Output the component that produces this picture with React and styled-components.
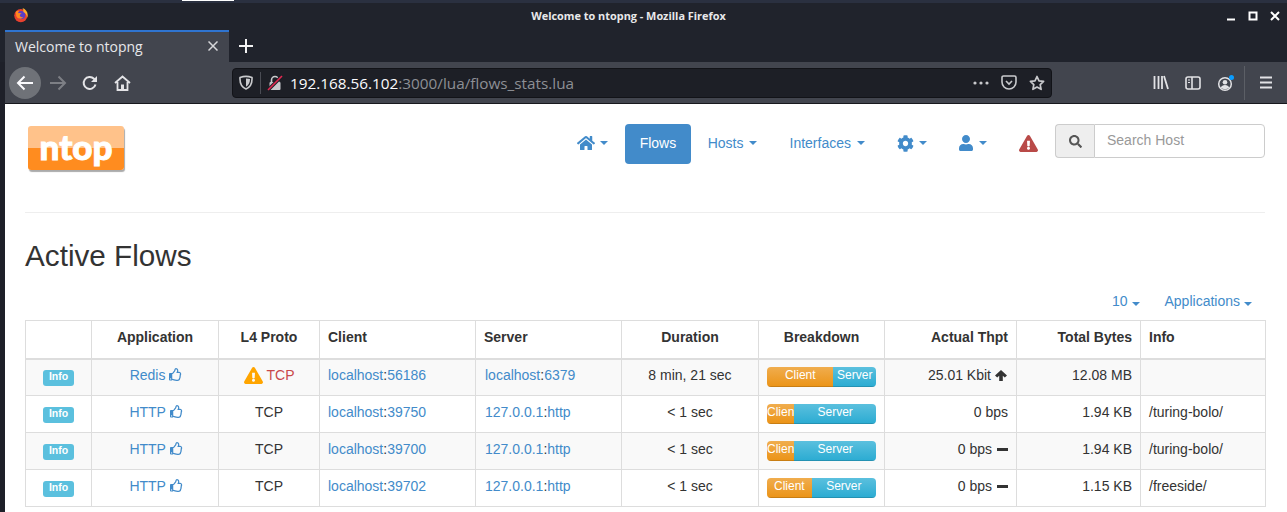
import React from 'react';
import styled, { createGlobalStyle } from 'styled-components';
import { FaHome, FaCog, FaUser, FaExclamationTriangle, FaSearch, FaRegThumbsUp } from 'react-icons/fa';

const GlobalStyle = createGlobalStyle`
  html, body { margin: 0; padding: 0; background: #fff; overflow: hidden; }
  * { box-sizing: border-box; }
  body { font-family: "Liberation Sans", Arial, sans-serif; font-size: 14px; color: #333; }
  a { color: #428bca; text-decoration: none; }
`;

const Frame = styled.div`
  width: 1287px;
  height: 512px;
  overflow: hidden;
  display: flex;
  flex-direction: column;
  background: #1e2029;
`;

const TitleBar = styled.div`
  height: 30px;
  flex: none;
  background: #20232c;
  border-top: 3px solid #2a3040;
  display: flex;
  align-items: center;
  padding: 0 7px 3px 13px;
  position: relative;
`;

const BehindWindow = styled.div`
  position: absolute;
  top: -3px;
  left: 182px;
  width: 52px;
  height: 1px;
  background: #fff;
`;

const WindowTitle = styled.div`
  flex: 1;
  text-align: center;
  color: #e8e8ea;
  font: 700 10.9px "Open Sans", sans-serif;
  padding-left: 2px;
`;

const WindowButtons = styled.div`
  display: flex;
  align-items: center;
  gap: 12px;
  padding-top: 2px;
`;

const TabStrip = styled.div`
  height: 32px;
  flex: none;
  background: #20232c;
  display: flex;
  align-items: stretch;
  padding-left: 5px;
`;

const Tab = styled.div`
  width: 224px;
  background: #42454e;
  border-top: 2px solid #2f74d0;
  color: #e6e7ea;
  font: 400 14px "Open Sans", sans-serif;
  display: flex;
  align-items: center;
  justify-content: space-between;
  padding: 0 11px 2px 10px;
`;

const NewTab = styled.div`
  width: 34px;
  display: flex;
  align-items: center;
  justify-content: center;
`;

const Toolbar = styled.div`
  height: 42px;
  flex: none;
  margin-left: 5px;
  background: #42454e;
  border-bottom: 1px solid #17181d;
  display: flex;
  align-items: center;
  padding-left: 4px;
`;

const RoundBack = styled.div`
  width: 32px;
  height: 32px;
  border-radius: 50%;
  background: #6f7278;
  display: flex;
  align-items: center;
  justify-content: center;
  margin-right: 6px;
`;

const NavIcon = styled.div`
  width: 22px;
  height: 22px;
  margin-right: 10px;
  display: flex;
  align-items: center;
  justify-content: center;
`;

const UrlBar = styled.div`
  width: 820px;
  height: 30px;
  margin-left: 89px;
  background: #1d1f26;
  border: 1px solid #121318;
  border-radius: 4px;
  display: flex;
  align-items: center;
  padding-left: 6px;
`;

const UrlDivider = styled.div`
  width: 1px;
  height: 22px;
  background: #4a4c54;
  margin: 0 6px 0 7px;
`;

const UrlText = styled.div`
  flex: 1;
  margin-left: 7px;
  font: 400 15.3px "Open Sans", sans-serif;
  color: #8d8f95;
  span { color: #fbfbfe; }
`;

const UrlActions = styled.div`
  display: flex;
  align-items: center;
  gap: 12px;
  padding-right: 6px;
`;

const ToolbarRight = styled.div`
  flex: 1;
  display: flex;
  align-items: center;
  justify-content: flex-end;
  padding-right: 14px;
  gap: 16px;
`;

const ToolbarSep = styled.div`
  width: 1px;
  height: 34px;
  background: #5c5f66;
  margin: 0 -2px 0 -7px;
`;

const Page = styled.div`
  flex: 1;
  background: #fff;
  margin-left: 5px;
  padding: 0 22px 0 20px;
  min-height: 0;
`;

const Header = styled.div`
  height: 109px;
  border-bottom: 1px solid #eee;
  display: flex;
  align-items: flex-start;
`;

const Logo = styled.div`
  width: 96px;
  height: 44px;
  margin: 22px 0 0 3px;
  border-radius: 3px;
  background: linear-gradient(#ffc28a 0 50%, #ff8c1f 50% 100%);
  box-shadow: 1px 2px 1px #aaa;
  color: #fff;
  font: 900 35px/41px "Lato", sans-serif;
  -webkit-text-stroke: 1px #fff;
  text-align: center;
`;

const Nav = styled.nav`
  margin-left: auto;
  display: flex;
  align-items: flex-start;
  gap: 2px;
  margin-top: 20px;
`;

const NavLink = styled.a`
  height: 40px;
  display: flex;
  align-items: center;
  padding: 0 ${(p) => p.$pad ?? 15}px 2px;
  margin-right: ${(p) => p.$right || 0}px;
  border-radius: 4px;
  color: ${(p) => (p.$active ? '#fff' : '#428bca')};
  background: ${(p) => (p.$active ? '#428bca' : 'transparent')};
`;

const Caret = styled.span`
  display: inline-block;
  width: 0;
  height: 0;
  margin-left: ${(p) => p.$gap || 5}px;
  border-top: 4px solid #428bca;
  border-left: 4px solid transparent;
  border-right: 4px solid transparent;
`;

const SearchGroup = styled.div`
  display: flex;
  width: 210px;
  height: 34px;
`;

const SearchAddon = styled.div`
  width: 39px;
  background: #eee;
  border: 1px solid #ccc;
  border-right: 0;
  border-radius: 4px 0 0 4px;
  display: flex;
  align-items: center;
  justify-content: center;
  color: #555;
`;

const SearchInput = styled.div`
  flex: 1;
  border: 1px solid #ccc;
  border-radius: 0 4px 4px 0;
  color: #999;
  padding: 0 12px;
  line-height: 31px;
`;

const Title = styled.h2`
  margin: 24px 0 0;
  font-size: 29.7px;
  font-weight: 500;
  line-height: 38px;
  color: #333;
`;

const TableTools = styled.div`
  display: flex;
  justify-content: flex-end;
  gap: 25px;
  height: 20px;
  margin-top: 16px;
  padding-right: 13px;
  line-height: 20px;
`;

const ToolCaret = styled(Caret)`
  margin-left: 4px;
`;

const Table = styled.table`
  width: 1240px;
  table-layout: fixed;
  border-collapse: collapse;
  margin-top: 9px;
`;

const Th = styled.th`
  height: 38px;
  padding: 0 8px 4px;
  border: 1px solid #ddd;
  border-bottom: 2px solid #ddd;
  font-weight: 700;
  text-align: ${(p) => p.$align || 'center'};
`;

const Row = styled.tr`
  background: ${(p) => (p.$odd ? '#f9f9f9' : '#fff')};
`;

const Td = styled.td`
  height: 37px;
  padding: 0 8px 4px ${(p) => p.$indent || 8}px;
  border: 1px solid #ddd;
  text-align: ${(p) => p.$align || 'center'};
  white-space: nowrap;
`;

const InfoBadge = styled.span`
  display: inline-block;
  padding: 1px 6px 4px;
  margin-top: 6px;
  border-radius: 3px;
  background: #5bc0de;
  color: #fff;
  font-size: 10.5px;
  font-weight: 700;
  line-height: 11px;
`;

const Thumb = styled(FaRegThumbsUp)`
  color: #428bca;
  font-size: 13px;
  vertical-align: -1px;
`;

const WarnIcon = styled(FaExclamationTriangle)`
  color: #ffa500;
  font-size: 19px;
  vertical-align: -2px;
  margin: -5px 4px -3px 0;
`;

const Danger = styled.span`
  color: #c9484a;
`;

const Bar = styled.div`
  display: flex;
  width: 109px;
  height: 20px;
  margin-top: 4px;
  border-radius: 4px;
  overflow: hidden;
  color: #fff;
  font-size: 12px;
  line-height: 16px;
  text-align: center;
`;

const Segment = styled.div`
  overflow: hidden;
  background: ${(p) => (p.$kind === 'client'
    ? 'linear-gradient(#f0ad4e, #eb9316)'
    : 'linear-gradient(#5bc0de, #2aabd2)')};
  box-shadow: inset 0 -1px 0 rgba(0, 0, 0, 0.15);
`;

const TrendFlat = styled.span`
  display: inline-block;
  width: 11px;
  height: 3px;
  margin-left: 5px;
  vertical-align: 3px;
  background: #333;
`;

const TrendUpIcon = styled.svg`
  margin: 0 1px 0 4px;
  vertical-align: -1px;
`;

const TrendUp = () => (
  <TrendUpIcon width="12" height="11" viewBox="0 0 12 11">
    <path d="M6 0l6 5.500-2.200 2-2-1.800V11H4.200V5.700l-2 1.800L0 5.500z" fill="#333" />
  </TrendUpIcon>
);

const Firefox = () => (
  <svg width="16" height="16" viewBox="0 0 16 16">
    <circle cx="7.8" cy="8.6" r="6.6" fill="#e8412f" />
    <circle cx="8.3" cy="8" r="4" fill="#5a3ec8" />
    <path d="M9.5 1c3 1.2 5.200 3.500 5.200 7 0 1-.2 1.900-.6 2.700-.2-2.700-1.500-4.700-3.700-5.700 .2-1.400-.1-2.900-.9-4z" fill="#ffb02e" />
    <path d="M3 4.500c1-.6 2-.8 3-.6-.7.8-1 1.600-.8 2.400 1.200-.5 2.600-.3 3.500.5-1.500.2-2 1-1.800 2 .3 1.300 2 1.800 3.400 1-.8 1.500-2.600 2.300-4.300 1.800C3.900 11 2.800 9 3.100 7c-.4-.6-.4-1.600-.1-2.500z" fill="#ff8a1f" />
  </svg>
);

const Minimize = () => (
  <svg width="10" height="10" viewBox="0 0 10 10"><path d="M1 8.500h8" stroke="#fff" strokeWidth="2" /></svg>
);
const Maximize = () => (
  <svg width="10" height="10" viewBox="0 0 10 10"><rect x="1.500" y="1.500" width="7" height="7" fill="none" stroke="#fff" strokeWidth="2" /></svg>
);
const CloseWin = () => (
  <svg width="10" height="10" viewBox="0 0 10 10"><path d="M1 1l8 8M9 1l-8 8" stroke="#fff" strokeWidth="2" /></svg>
);
const CloseTab = () => (
  <svg width="10" height="10" viewBox="0 0 10 10"><path d="M.5.5l9 9M9.500.5l-9 9" stroke="#d6d7da" strokeWidth="1.500" /></svg>
);
const Plus = () => (
  <svg width="14" height="14" viewBox="0 0 14 14"><path d="M7 0v14M0 7h14" stroke="#f2f2f3" strokeWidth="2" /></svg>
);
const ArrowLeft = () => (
  <svg width="18" height="16" viewBox="0 0 18 16"><path d="M17 8H2M8.500 1.500L2 8l6.500 6.500" fill="none" stroke="#fbfbfe" strokeWidth="2" /></svg>
);
const ArrowRight = () => (
  <svg width="18" height="16" viewBox="0 0 18 16"><path d="M1 8h15M9.500 1.500L16 8l-6.500 6.500" fill="none" stroke="#7d7f85" strokeWidth="2" /></svg>
);
const Reload = () => (
  <svg width="16" height="16" viewBox="0 0 16 16"><path d="M13.500 9.500A6 6 0 1 1 12 3.800L14 5.500" fill="none" stroke="#e4e4e7" strokeWidth="2" /><path d="M15 1v6H9z" fill="#e4e4e7" /></svg>
);
const BrowserHome = () => (
  <svg width="17" height="16" viewBox="0 0 17 16"><path d="M1 8l7.500-6.500L16 8M3.500 7v8h10V7" fill="none" stroke="#e4e4e7" strokeWidth="1.800" /><rect x="7" y="9.500" width="3" height="5" fill="#e4e4e7" /></svg>
);
const Shield = () => (
  <svg width="14" height="15" viewBox="0 0 14 15"><path d="M1 2.500c4-1.500 8-1.500 12 0 .3 5-1 9.500-6 11.500C2 12 .7 7.500 1 2.500z" fill="none" stroke="#c9cacd" strokeWidth="1.600" /><path d="M7 3.500c1.500 0 3 .2 4 .6 0 3-.9 6-4 7.600z" fill="#c9cacd" /></svg>
);
const BrokenLock = () => (
  <svg width="16" height="16" viewBox="0 0 16 16">
    <path d="M4.500 7V5a3.500 3.500 0 0 1 7 0v2" fill="none" stroke="#c9cacd" strokeWidth="1.600" />
    <rect x="2.500" y="7" width="11" height="8" rx="1" fill="#c9cacd" />
    <path d="M1 15L15 1" stroke="#1d1f26" strokeWidth="3.500" />
    <path d="M1 15L15 1" stroke="#e22850" strokeWidth="1.600" />
  </svg>
);
const Dots = () => (
  <svg width="16" height="4" viewBox="0 0 16 4" fill="#c9cacd"><circle cx="2" cy="2" r="1.600" /><circle cx="8" cy="2" r="1.600" /><circle cx="14" cy="2" r="1.600" /></svg>
);
const Pocket = () => (
  <svg width="16" height="15" viewBox="0 0 16 15"><path d="M1 2.500C1 1.600 1.600 1 2.500 1h11c.9 0 1.500.6 1.500 1.500V7a7 7 0 0 1-14 0z" fill="none" stroke="#c9cacd" strokeWidth="1.600" /><path d="M5 6l3 3 3-3" fill="none" stroke="#c9cacd" strokeWidth="1.600" /></svg>
);
const Star = () => (
  <svg width="16" height="16" viewBox="0 0 16 16"><path d="M8 1.500l2 4.300 4.600.6-3.400 3.200.9 4.700L8 12l-4.100 2.300.9-4.700L1.400 6.400 6 5.800z" fill="none" stroke="#c9cacd" strokeWidth="1.700" strokeLinejoin="round" /></svg>
);
const Library = () => (
  <svg width="16" height="15" viewBox="0 0 16 15" stroke="#e2e2e5" strokeWidth="1.800"><path d="M1.500 1v13M5.500 1v13M9 1v13M11 1l4 13" fill="none" /></svg>
);
const Sidebar = () => (
  <svg width="16" height="14" viewBox="0 0 16 14"><rect x="1" y="1" width="14" height="12" rx="2" fill="none" stroke="#e2e2e5" strokeWidth="1.600" /><path d="M7 1v12" stroke="#e2e2e5" strokeWidth="1.600" /><path d="M3 4h2M3 6.500h2" stroke="#e2e2e5" strokeWidth="1.200" /></svg>
);
const Account = () => (
  <svg width="18" height="18" viewBox="0 0 18 18">
    <circle cx="8" cy="10" r="6.300" fill="none" stroke="#e2e2e5" strokeWidth="1.500" />
    <circle cx="8" cy="8.200" r="2.300" fill="#e2e2e5" />
    <path d="M3.800 14c.5-2.300 2.200-3 4.200-3s3.700.7 4.200 3c-2.500 1.500-6 1.500-8.400 0z" fill="#e2e2e5" />
    <circle cx="14.500" cy="3.500" r="2.500" fill="#0a9dff" />
  </svg>
);
const Menu = () => (
  <svg width="14" height="13" viewBox="0 0 14 13"><path d="M1 1.500h12M1 6.500h12M1 11.500h12" stroke="#e2e2e5" strokeWidth="1.800" /></svg>
);

const columns = [
  { label: '', width: 66 },
  { label: 'Application', width: 127 },
  { label: 'L4 Proto', width: 101 },
  { label: 'Client', width: 156, align: 'left' },
  { label: 'Server', width: 146, align: 'left' },
  { label: 'Duration', width: 137 },
  { label: 'Breakdown', width: 126 },
  { label: 'Actual Thpt', width: 132, align: 'right' },
  { label: 'Total Bytes', width: 124, align: 'right' },
  { label: 'Info', width: 125, align: 'left' },
];

const flows = [
  { app: 'Redis', warn: true, clientPort: '56186', serverHost: 'localhost', serverPort: '6379', duration: '8 min, 21 sec', client: 61, thpt: '25.01 Kbit', trend: 'up', bytes: '12.08 MB', info: '' },
  { app: 'HTTP', clientPort: '39750', serverHost: '127.0.0.1', serverPort: 'http', duration: '< 1 sec', client: 25, thpt: '0 bps', bytes: '1.94 KB', info: '/turing-bolo/' },
  { app: 'HTTP', clientPort: '39700', serverHost: '127.0.0.1', serverPort: 'http', duration: '< 1 sec', client: 25, thpt: '0 bps', trend: 'flat', bytes: '1.94 KB', info: '/turing-bolo/' },
  { app: 'HTTP', clientPort: '39702', serverHost: '127.0.0.1', serverPort: 'http', duration: '< 1 sec', client: 41, thpt: '0 bps', trend: 'flat', bytes: '1.15 KB', info: '/freeside/' },
];

export default function App() {
  return (
    <Frame>
      <GlobalStyle />
      <TitleBar>
        <BehindWindow />
        <Firefox />
        <WindowTitle>Welcome to ntopng - Mozilla Firefox</WindowTitle>
        <WindowButtons>
          <Minimize />
          <Maximize />
          <CloseWin />
        </WindowButtons>
      </TitleBar>
      <TabStrip>
        <Tab>
          Welcome to ntopng
          <CloseTab />
        </Tab>
        <NewTab><Plus /></NewTab>
      </TabStrip>
      <Toolbar>
        <RoundBack><ArrowLeft /></RoundBack>
        <NavIcon><ArrowRight /></NavIcon>
        <NavIcon><Reload /></NavIcon>
        <NavIcon><BrowserHome /></NavIcon>
        <UrlBar>
          <Shield />
          <UrlDivider />
          <BrokenLock />
          <UrlText><span>192.168.56.102</span>:3000/lua/flows_stats.lua</UrlText>
          <UrlActions>
            <Dots />
            <Pocket />
            <Star />
          </UrlActions>
        </UrlBar>
        <ToolbarRight>
          <Library />
          <Sidebar />
          <Account />
          <ToolbarSep />
          <Menu />
        </ToolbarRight>
      </Toolbar>
      <Page>
        <Header>
          <Logo>ntop</Logo>
          <Nav>
            <NavLink><FaHome size={18} /><Caret /></NavLink>
            <NavLink $active $pad={14.5}>Flows</NavLink>
            <NavLink $right={1}>Hosts<Caret /></NavLink>
            <NavLink>Interfaces<Caret $gap={6} /></NavLink>
            <NavLink $right={-1}><FaCog size={17} /><Caret /></NavLink>
            <NavLink><FaUser size={16} /><Caret /></NavLink>
            <NavLink><FaExclamationTriangle size={19} color="#b94a48" /></NavLink>
            <SearchGroup>
              <SearchAddon><FaSearch size={13} /></SearchAddon>
              <SearchInput>Search Host</SearchInput>
            </SearchGroup>
          </Nav>
        </Header>
        <Title>Active Flows</Title>
        <TableTools>
          <a>10<ToolCaret /></a>
          <a>Applications<ToolCaret /></a>
        </TableTools>
        <Table>
          <colgroup>
            {columns.map((c) => <col key={c.label} style={{ width: c.width }} />)}
          </colgroup>
          <thead>
            <tr>
              {columns.map((c) => <Th key={c.label} $align={c.align}>{c.label}</Th>)}
            </tr>
          </thead>
          <tbody>
            {flows.map((f, i) => (
              <Row key={f.clientPort} $odd={i % 2 === 0}>
                <Td><InfoBadge>Info</InfoBadge></Td>
                <Td $indent={10}><a>{f.app}</a> <Thumb /></Td>
                <Td>
                  {f.warn ? <><WarnIcon /><Danger>TCP</Danger></> : 'TCP'}
                </Td>
                <Td $align="left"><a>localhost</a>:<a>{f.clientPort}</a></Td>
                <Td $align="left" $indent={9}><a>{f.serverHost}</a>:<a>{f.serverPort}</a></Td>
                <Td>{f.duration}</Td>
                <Td>
                  <Bar>
                    <Segment $kind="client" style={{ width: `${f.client}%` }}>Client</Segment>
                    <Segment $kind="server" style={{ width: `${100 - f.client}%` }}>Server</Segment>
                  </Bar>
                </Td>
                <Td $align="right">
                  {f.thpt}
                  {f.trend === 'up' && <TrendUp />}
                  {f.trend === 'flat' && <TrendFlat />}
                </Td>
                <Td $align="right">{f.bytes}</Td>
                <Td $align="left">{f.info}</Td>
              </Row>
            ))}
          </tbody>
        </Table>
      </Page>
    </Frame>
  );
}
